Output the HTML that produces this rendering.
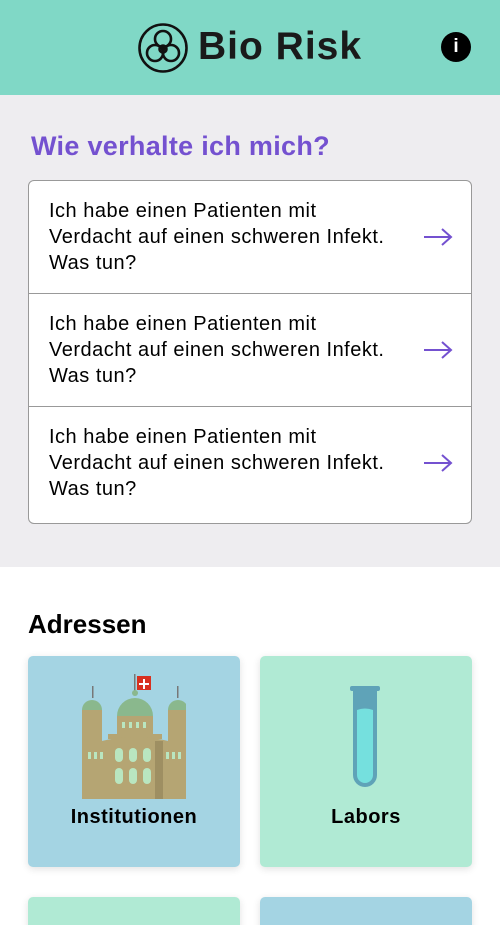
<!DOCTYPE html>
<html><head><style>
*{margin:0;padding:0;box-sizing:border-box}
html,body{width:500px;height:925px;overflow:hidden}
body{font-family:"Liberation Sans",sans-serif;background:#fff;position:relative}
.hd{height:95px;background:#80d8c6;position:relative}
.logo{position:absolute;left:137px;top:22px}
.ttl{position:absolute;left:198px;top:25px;font-size:39px;font-weight:bold;color:#1a1a1a;letter-spacing:1px}
.info{position:absolute;left:441px;top:32px;width:30px;height:30px;border-radius:50%;background:#000;color:#fff;font-weight:bold;font-size:19px;text-align:center;line-height:30px}
.gray{background:#eeedf0;height:472px;padding-top:36px}
h2{font-size:27px;color:#7451d0;margin-left:31px;height:49px;letter-spacing:.3px}
.list{margin:0 28px;border:1px solid #999;border-radius:6px;background:#fff;width:444px}
.row{height:113px;border-bottom:1px solid #999;position:relative;padding:17px 0 0 20px;font-size:20px;line-height:26px;color:#000;letter-spacing:.5px}
.row:last-child{border-bottom:none;height:116px}
.row svg{position:absolute;right:18px;top:46px}
h3{font-size:26px;margin:42px 0 0 28px;color:#000;height:47px}
.card{position:absolute;width:212px;height:211px;border-radius:5px;box-shadow:0 2px 8px rgba(0,0,0,.12)}
.lab{position:absolute;width:100%;text-align:center;top:150px;font-weight:bold;font-size:20px;letter-spacing:.5px}
</style></head><body>
<div class="hd">
<svg class="logo" width="52" height="52" viewBox="0 0 52 52" fill="none" stroke="#111" stroke-width="2.6"><circle cx="26" cy="26" r="23.5"/><circle cx="26" cy="17" r="8"/><circle cx="18" cy="31" r="8"/><circle cx="34" cy="31" r="8"/><circle cx="26" cy="27" r="3.5"/></svg>
<div class="ttl">Bio Risk</div>
<div class="info">i</div>
</div>
<div class="gray">
<h2>Wie verhalte ich mich?</h2>
<div class="list">
<div class="row">Ich habe einen Patienten mit<br>Verdacht auf einen schweren Infekt.<br>Was tun?<svg width="30" height="20" viewBox="0 0 30 20" fill="none" stroke="#7451d0" stroke-width="2"><path d="M1 10h27M19 2l9 8-9 8"/></svg></div>
<div class="row">Ich habe einen Patienten mit<br>Verdacht auf einen schweren Infekt.<br>Was tun?<svg width="30" height="20" viewBox="0 0 30 20" fill="none" stroke="#7451d0" stroke-width="2"><path d="M1 10h27M19 2l9 8-9 8"/></svg></div>
<div class="row">Ich habe einen Patienten mit<br>Verdacht auf einen schweren Infekt.<br>Was tun?<svg width="30" height="20" viewBox="0 0 30 20" fill="none" stroke="#7451d0" stroke-width="2"><path d="M1 10h27M19 2l9 8-9 8"/></svg></div>
</div>
</div>
<h3>Adressen</h3>
<div class="card" style="left:28px;top:656px;background:#a4d4e3">
<svg style="position:absolute;left:54px;top:18px" width="104" height="125" viewBox="0 0 104 125">
<rect x="52" y="0" width="1.5" height="18" fill="#777"/><rect x="55" y="2" width="14" height="14" fill="#d8301f"/><path d="M61 5h2v4h4v2h-4v4h-2v-4h-4v-2h4z" fill="#fff"/>
<circle cx="53" cy="19" r="3" fill="#8ab88d"/><path d="M35 42a18 18 0 0 1 36 0z" fill="#8ab88d"/>
<rect x="10" y="12" width="1.5" height="12" fill="#777"/><rect x="95" y="12" width="1.5" height="12" fill="#777"/>
<path d="M0 36a10 10 0 0 1 20 0zM86 36a10 10 0 0 1 20 0z" fill="#8ab88d"/>
<rect x="35" y="42" width="36" height="20" fill="#b5a573"/><rect x="26" y="60" width="54" height="5" fill="#b5a573"/>
<rect x="0" y="36" width="20" height="89" fill="#b5a573"/><rect x="86" y="36" width="18" height="89" fill="#b5a573"/>
<path d="M20 67q33-8 66 0v58H20z" fill="#b5a573"/><rect x="73" y="67" width="8" height="58" fill="#9e8f62"/>
<g fill="#b9e6c0"><rect x="40" y="48" width="3" height="6"/><rect x="47" y="48" width="3" height="6"/><rect x="54" y="48" width="3" height="6"/><rect x="61" y="48" width="3" height="6"/>
<rect x="33" y="74" width="8" height="14" rx="4"/><rect x="47" y="74" width="8" height="14" rx="4"/><rect x="61" y="74" width="8" height="14" rx="4"/>
<rect x="33" y="94" width="8" height="16" rx="4"/><rect x="47" y="94" width="8" height="16" rx="4"/><rect x="61" y="94" width="8" height="16" rx="4"/>
<rect x="6" y="78" width="3" height="7"/><rect x="12" y="78" width="3" height="7"/><rect x="18" y="78" width="3" height="7"/><rect x="84" y="78" width="3" height="7"/><rect x="90" y="78" width="3" height="7"/><rect x="96" y="78" width="3" height="7"/></g>
</svg>
<div class="lab">Institutionen</div></div>
<div class="card" style="left:260px;top:656px;background:#b0ead4">
<svg style="position:absolute;left:88px;top:30px" width="34" height="104" viewBox="0 0 34 104"><rect x="2" y="0" width="30" height="5" rx="2" fill="#5fa3b8"/><path d="M5 4h24v85a12 12 0 0 1-24 0z" fill="#5fa3b8"/><path d="M9 24q8-3 16 0v65a8 8 0 0 1-16 0z" fill="#75e0de"/></svg>
<div class="lab">Labors</div></div>
<div class="card" style="left:260px;top:897px;background:#a4d4e3"></div>
<div class="card" style="left:28px;top:897px;background:#b0ead4"></div>
</body></html>
